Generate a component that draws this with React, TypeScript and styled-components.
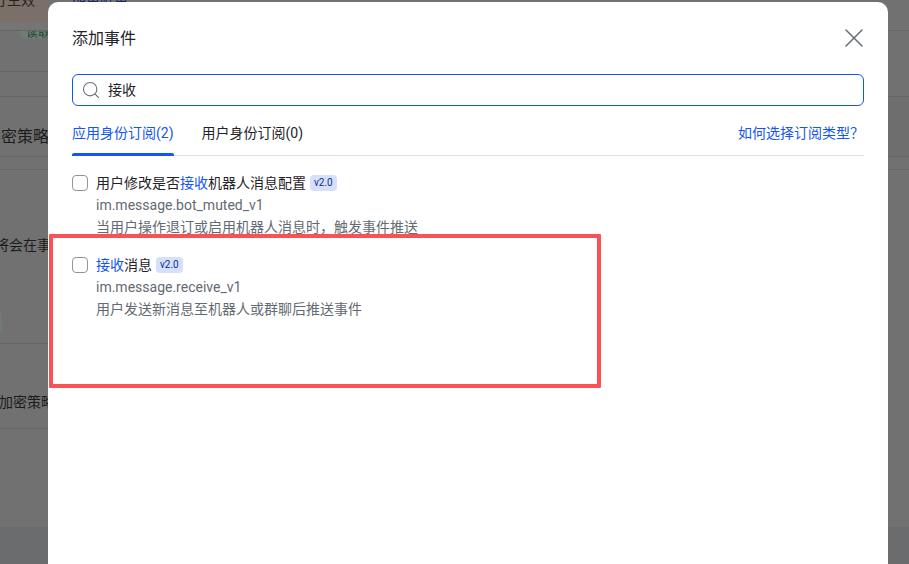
import React from 'react';
import styled, { createGlobalStyle } from 'styled-components';
import { Search, X } from 'lucide-react';

const font = `"Roboto", "Noto Sans CJK SC", sans-serif`;

const GlobalStyle = createGlobalStyle`
  html, body {
    margin: 0;
    padding: 0;
    height: 100%;
    overflow: hidden;
    background: #717171;
  }
  * { box-sizing: border-box; }
`;

const events = [
  {
    before: '用户修改是否',
    match: '接收',
    after: '机器人消息配置',
    key: 'im.message.bot_muted_v1',
    desc: '当用户操作退订或启用机器人消息时，触发事件推送',
  },
  {
    before: '',
    match: '接收',
    after: '消息',
    key: 'im.message.receive_v1',
    desc: '用户发送新消息至机器人或群聊后推送事件',
  },
];

export default function App() {
  return (
    <Page>
      <GlobalStyle />
      <Backdrop>
        <LeftPane>
          <BannerRow>
            <BannerText>订生效</BannerText>
          </BannerRow>
          <BackRow $height={41}>
            <GreenTag>读取</GreenTag>
          </BackRow>
          <BackRow $height={25} />
          <BackRow $height={60} $pad={29}>
            <BackLabel $size={16} $shift={-15}>加密策略</BackLabel>
          </BackRow>
          <BackRow $height={13} />
          <PolicyRow>
            <BackLabel $size={14} $shift={-5}>将会在事</BackLabel>
            <GreenChip />
          </PolicyRow>
          <BackRow $height={85} $pad={47}>
            <BackLabel $size={14} $shift={-1}>加密策略</BackLabel>
          </BackRow>
        </LeftPane>
        <RightPane>
          <BackRow $height={31}>
            <BannerLink>加密解密</BannerLink>
          </BackRow>
          <BackRow $height={66} />
          <BackRow $height={60} $dark />
          <BackRow $height={13} />
        </RightPane>
        <BottomShade />
      </Backdrop>
      <Modal>
        <Header>
          <Title>添加事件</Title>
          <CloseButton type="button">
            <X size={32} strokeWidth={1.1} />
          </CloseButton>
        </Header>
        <SearchBox>
          <Search size={20} strokeWidth={1.3} color="#6b7079" />
          <SearchText>接收</SearchText>
        </SearchBox>
        <Tabs>
          <Tab $active>应用身份订阅(2)</Tab>
          <Tab>用户身份订阅(0)</Tab>
          <HelpLink>如何选择订阅类型？</HelpLink>
        </Tabs>
        <EventList>
          {events.map((item) => (
            <EventRow key={item.key}>
              <CheckBox />
              <div>
                <EventTitle>
                  {item.before}
                  <Match>{item.match}</Match>
                  {item.after}
                  <Version>v2.0</Version>
                </EventTitle>
                <EventLine>{item.key}</EventLine>
                <EventLine>{item.desc}</EventLine>
              </div>
            </EventRow>
          ))}
        </EventList>
      </Modal>
      <Annotation />
    </Page>
  );
}

const Page = styled.div`
  position: relative;
  width: 909px;
  height: 564px;
  overflow: hidden;
  font-family: ${font};
`;

const Backdrop = styled.div`
  display: grid;
  grid-template-columns: 48px 1fr;
  grid-template-rows: 527px 37px;
  height: 100%;
  background: #717171;
`;

const LeftPane = styled.div`
  overflow: hidden;
`;

const RightPane = styled.div`
  overflow: hidden;
`;

const BackRow = styled.div<{ $height: number; $pad?: number; $dark?: boolean }>`
  display: flex;
  align-items: flex-start;
  height: ${({ $height }) => $height}px;
  padding-top: ${({ $pad }) => $pad ?? 0}px;
  border-bottom: 1px solid #666666;
  background: ${({ $dark }) => ($dark ? '#6e6e6e' : 'transparent')};
  white-space: nowrap;
`;

const BannerRow = styled.div`
  height: 31px;
  overflow: hidden;
  border-bottom: 1px solid #666666;
  background: linear-gradient(#7a7069 0 22px, #757575 22px);
`;

const BannerText = styled.div`
  margin: -10px 0 0 -7px;
  font-size: 14px;
  line-height: 20px;
  color: #2a211b;
  white-space: nowrap;
`;

const BannerLink = styled.span`
  margin: -14px 0 0 24px;
  font-size: 14px;
  line-height: 20px;
  color: #0f2a6b;
`;

const GreenTag = styled.span`
  margin-left: 20px;
  padding: 0 6px;
  height: 8px;
  overflow: hidden;
  font-size: 12px;
  line-height: 4px;
  color: #1f4a35;
  background: #6f7d76;
  border-radius: 0 0 6px 6px;
`;

const BackLabel = styled.span<{ $size: number; $shift: number }>`
  flex: none;
  margin-left: ${({ $shift }) => $shift}px;
  font-size: ${({ $size }) => $size}px;
  line-height: 22px;
  color: #1c1c1c;
`;

const PolicyRow = styled.div`
  display: flex;
  flex-direction: column;
  align-items: flex-start;
  height: 174px;
  padding-top: 64px;
  border-bottom: 1px solid #666666;
  white-space: nowrap;
`;

const GreenChip = styled.span`
  width: 2px;
  height: 18px;
  margin-top: 57px;
  background: #6f7d70;
`;

const BottomShade = styled.div`
  grid-column: 1 / -1;
  background: #6b6c6e;
`;

const Modal = styled.div`
  position: absolute;
  top: 2px;
  left: 48px;
  width: 840px;
  height: 580px;
  padding: 0 24px;
  background: #ffffff;
  border-radius: 10px;
`;

const Header = styled.div`
  display: flex;
  align-items: center;
  justify-content: space-between;
  height: 72px;
`;

const Title = styled.div`
  padding-top: 2px;
  font-size: 16px;
  line-height: 24px;
  color: #1f2329;
`;

const CloseButton = styled.button`
  display: flex;
  margin: 0 -6px 0 0;
  padding: 0;
  border: none;
  background: none;
  color: #646a73;
`;

const SearchBox = styled.div`
  display: flex;
  align-items: center;
  gap: 7px;
  height: 32px;
  padding: 0 8px;
  border: 1px solid #1456f0;
  border-radius: 6px;
`;

const SearchText = styled.span`
  font-size: 14px;
  line-height: 20px;
  color: #1f2329;
`;

const Tabs = styled.div`
  display: flex;
  align-items: flex-start;
  gap: 28px;
  height: 50px;
  padding-top: 17px;
  border-bottom: 1px solid #dee0e3;
`;

const Tab = styled.div<{ $active?: boolean }>`
  position: relative;
  height: 33px;
  font-size: 14px;
  line-height: 20px;
  color: ${({ $active }) => ($active ? '#1456f0' : '#1f2329')};

  &::after {
    content: '';
    display: ${({ $active }) => ($active ? 'block' : 'none')};
    position: absolute;
    left: 0;
    right: 0;
    bottom: 0;
    height: 3px;
    border-radius: 2px 2px 0 0;
    background: #1456f0;
  }
`;

const HelpLink = styled.a`
  margin-left: auto;
  font-size: 14px;
  line-height: 20px;
  color: #1456f0;
`;

const EventList = styled.div`
  display: flex;
  flex-direction: column;
  gap: 16px;
  padding-top: 16px;
`;

const EventRow = styled.div`
  display: flex;
  gap: 8px;
`;

const CheckBox = styled.span`
  flex: none;
  width: 16px;
  height: 16px;
  margin-top: 3px;
  border: 1px solid #8f959e;
  border-radius: 4px;
`;

const EventTitle = styled.div`
  display: flex;
  align-items: center;
  height: 22px;
  font-size: 14px;
  line-height: 20px;
  color: #1f2329;
  white-space: pre;
`;

const Match = styled.span`
  color: #1456f0;
`;

const Version = styled.span`
  margin-left: 4px;
  padding: 0 4px;
  height: 16px;
  font-size: 10px;
  font-weight: 400;
  line-height: 16px;
  color: #0a2c8f;
  background: #d6e0fb;
  border-radius: 4px;
`;

const EventLine = styled.div`
  height: 22px;
  font-size: 14px;
  line-height: 22px;
  color: #646a73;
`;

const Annotation = styled.div`
  position: absolute;
  top: 234px;
  left: 49px;
  width: 552px;
  height: 154px;
  border: 4px solid #fa5252;
  border-radius: 1px;
`;
